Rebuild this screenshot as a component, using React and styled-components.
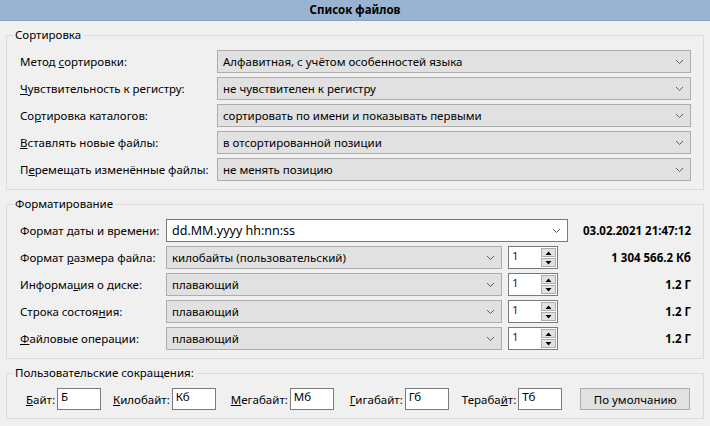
import React from "react";
import styled, { createGlobalStyle } from "styled-components";

const GlobalStyle = createGlobalStyle`
  html, body {
    margin: 0;
    padding: 0;
    background: #f0f0f0;
  }
  body {
    font-family: "Noto Sans", "Open Sans", sans-serif;
    font-size: 11.5px;
    color: #000;
  }
`;

const Window = styled.div`
  width: 710px;
  height: 426px;
  background: #f0f0f0;
  overflow: hidden;
`;

const TitleBar = styled.div`
  height: 20px;
  line-height: 20px;
  background: #99b4d1;
  border-bottom: 1px solid #8ba0b9;
  text-align: center;
  font-weight: bold;
`;

const Group = styled.fieldset`
  margin: 6px 6px 0;
  padding: 7px 12px 8px 13px;
  border: 1px solid #dcdcdc;
  min-width: 0;
`;

const Legend = styled.legend`
  margin-left: -7px;
  padding: 0 2px;
  line-height: 16px;
  height: 16px;
`;

const Rows = styled.div`
  display: flex;
  flex-direction: column;
  gap: 4px;
`;

const Row = styled.div`
  display: flex;
  align-items: center;
  height: 23px;
`;

const Label = styled.div`
  flex: 0 0 ${(p) => p.$w}px;
  white-space: nowrap;
  line-height: 16px;
`;

const Combo = styled.div`
  box-sizing: border-box;
  flex: 0 0 ${(p) => p.$w}px;
  height: 23px;
  display: flex;
  align-items: center;
  padding: 0 6px 0 5px;
  background: ${(p) => (p.$editable ? "#ffffff" : "#e1e1e1")};
  border: 1px solid ${(p) => (p.$editable ? "#7a7a7a" : "#adadad")};
  font-size: ${(p) => (p.$editable ? 12.5 : 11.5)}px;
`;

const ComboText = styled.span`
  flex: 1;
  white-space: nowrap;
  overflow: hidden;
`;

const Chevron = () => (
  <svg width="9" height="6" viewBox="0 0 9 6">
    <polyline points="1,1 4.5,4.5 8,1" fill="none" stroke="#5f5f5f" strokeWidth="1" />
  </svg>
);

const Spin = styled.div`
  box-sizing: border-box;
  flex: 0 0 50px;
  height: 23px;
  margin-left: 6px;
  display: flex;
  background: #fff;
  border: 1px solid #7a7a7a;
  padding: 1px 1px 1px 3px;
`;

const SpinValue = styled.span`
  flex: 1;
  line-height: 16px;
  color: #3a1060;
`;

const SpinButtons = styled.div`
  display: flex;
  flex-direction: column;
  gap: 1px;
  width: 15px;
`;

const SpinButton = styled.div`
  box-sizing: border-box;
  height: 10px;
  background: #e1e1e1;
  border: 1px solid #adadad;
  display: flex;
  align-items: center;
  justify-content: center;
`;

const Tri = ({ up }) => (
  <svg width="7" height="4" viewBox="0 0 7 4">
    <polygon points={up ? "0.5,4 3.5,0.5 6.5,4" : "0.5,0 3.5,3.5 6.5,0"} fill="#000" />
  </svg>
);

const Value = styled.div`
  flex: 1;
  text-align: right;
  font-weight: bold;
  white-space: nowrap;
`;

const Abbrevs = styled.div`
  display: flex;
  align-items: center;
  height: 22px;
  padding-left: 6px;
`;

const Pair = styled.div`
  display: flex;
  align-items: center;
  flex-shrink: 0;
  margin-right: ${(p) => p.$gap}px;
`;

const SmallLabel = styled.span`
  margin-right: 2px;
  white-space: nowrap;
`;

const TextBox = styled.div`
  box-sizing: border-box;
  width: 44px;
  height: 22px;
  background: #fff;
  border: 1px solid #7a7a7a;
  padding: 0 3px;
  line-height: 16px;
`;

const Button = styled.div`
  box-sizing: border-box;
  flex: 0 0 110px;
  height: 22px;
  background: #e1e1e1;
  border: 1px solid #adadad;
  display: flex;
  align-items: center;
  justify-content: center;
`;

const sortRows = [
  [<>Метод <u>с</u>ортировки:</>, "Алфавитная, с учётом особенностей языка"],
  [<><u>Ч</u>увствительность к регистру:</>, "не чувствителен к регистру"],
  [<>Со<u>р</u>тировка каталогов:</>, "сортировать по имени и показывать первыми"],
  [<><u>В</u>ставлять новые файлы:</>, "в отсортированной позиции"],
  [<>П<u>е</u>ремещать изменённые файлы:</>, "не менять позицию"],
];

const formatRows = [
  [<>Формат <u>р</u>азмера файла:</>, "килобайты (пользовательский)", "1 304 566.2 Кб"],
  [<>Информа<u>ц</u>ия о диске:</>, "плавающий", "1.2 Г"],
  [<>Строка состоя<u>н</u>ия:</>, "плавающий", "1.2 Г"],
  [<><u>Ф</u>айловые операции:</>, "плавающий", "1.2 Г"],
];

// label, value, space before the next field
const abbrevs = [
  [<><u>Б</u>айт:</>, "Б", 12],
  [<><u>К</u>илобайт:</>, "Кб", 15],
  [<><u>М</u>егабайт:</>, "Мб", 16],
  [<><u>Г</u>игабайт:</>, "Гб", 13],
  [<>Тераба<u>й</u>т:</>, "Тб", 18],
];

const App = () => {
  return (
    <Window>
      <GlobalStyle />
      <TitleBar>Список файлов</TitleBar>

      <Group>
        <Legend>Сортировка</Legend>
        <Rows>
          {sortRows.map(([label, value], i) => (
            <Row key={i}>
              <Label $w={197}>{label}</Label>
              <Combo $w={474}>
                <ComboText>{value}</ComboText>
                <Chevron />
              </Combo>
            </Row>
          ))}
        </Rows>
      </Group>

      <Group>
        <Legend>Форматирование</Legend>
        <Rows>
          <Row>
            <Label $w={146}>
              Формат <u>д</u>аты и времени:
            </Label>
            <Combo $w={402} $editable>
              <ComboText>dd.MM.yyyy hh:nn:ss</ComboText>
              <Chevron />
            </Combo>
            <Value>03.02.2021 21:47:12</Value>
          </Row>
          {formatRows.map(([label, value, result], i) => (
            <Row key={i}>
              <Label $w={146}>{label}</Label>
              <Combo $w={336}>
                <ComboText>{value}</ComboText>
                <Chevron />
              </Combo>
              <Spin>
                <SpinValue>1</SpinValue>
                <SpinButtons>
                  <SpinButton>
                    <Tri up />
                  </SpinButton>
                  <SpinButton>
                    <Tri />
                  </SpinButton>
                </SpinButtons>
              </Spin>
              <Value>{result}</Value>
            </Row>
          ))}
        </Rows>
      </Group>

      <Group>
        <Legend>Пользовательские сокращения:</Legend>
        <Abbrevs>
          {abbrevs.map(([label, value, gap], i) => (
            <Pair key={i} $gap={gap}>
              <SmallLabel>{label}</SmallLabel>
              <TextBox>{value}</TextBox>
            </Pair>
          ))}
          <Button>По умолчанию</Button>
        </Abbrevs>
      </Group>
    </Window>
  );
};

export default App;
